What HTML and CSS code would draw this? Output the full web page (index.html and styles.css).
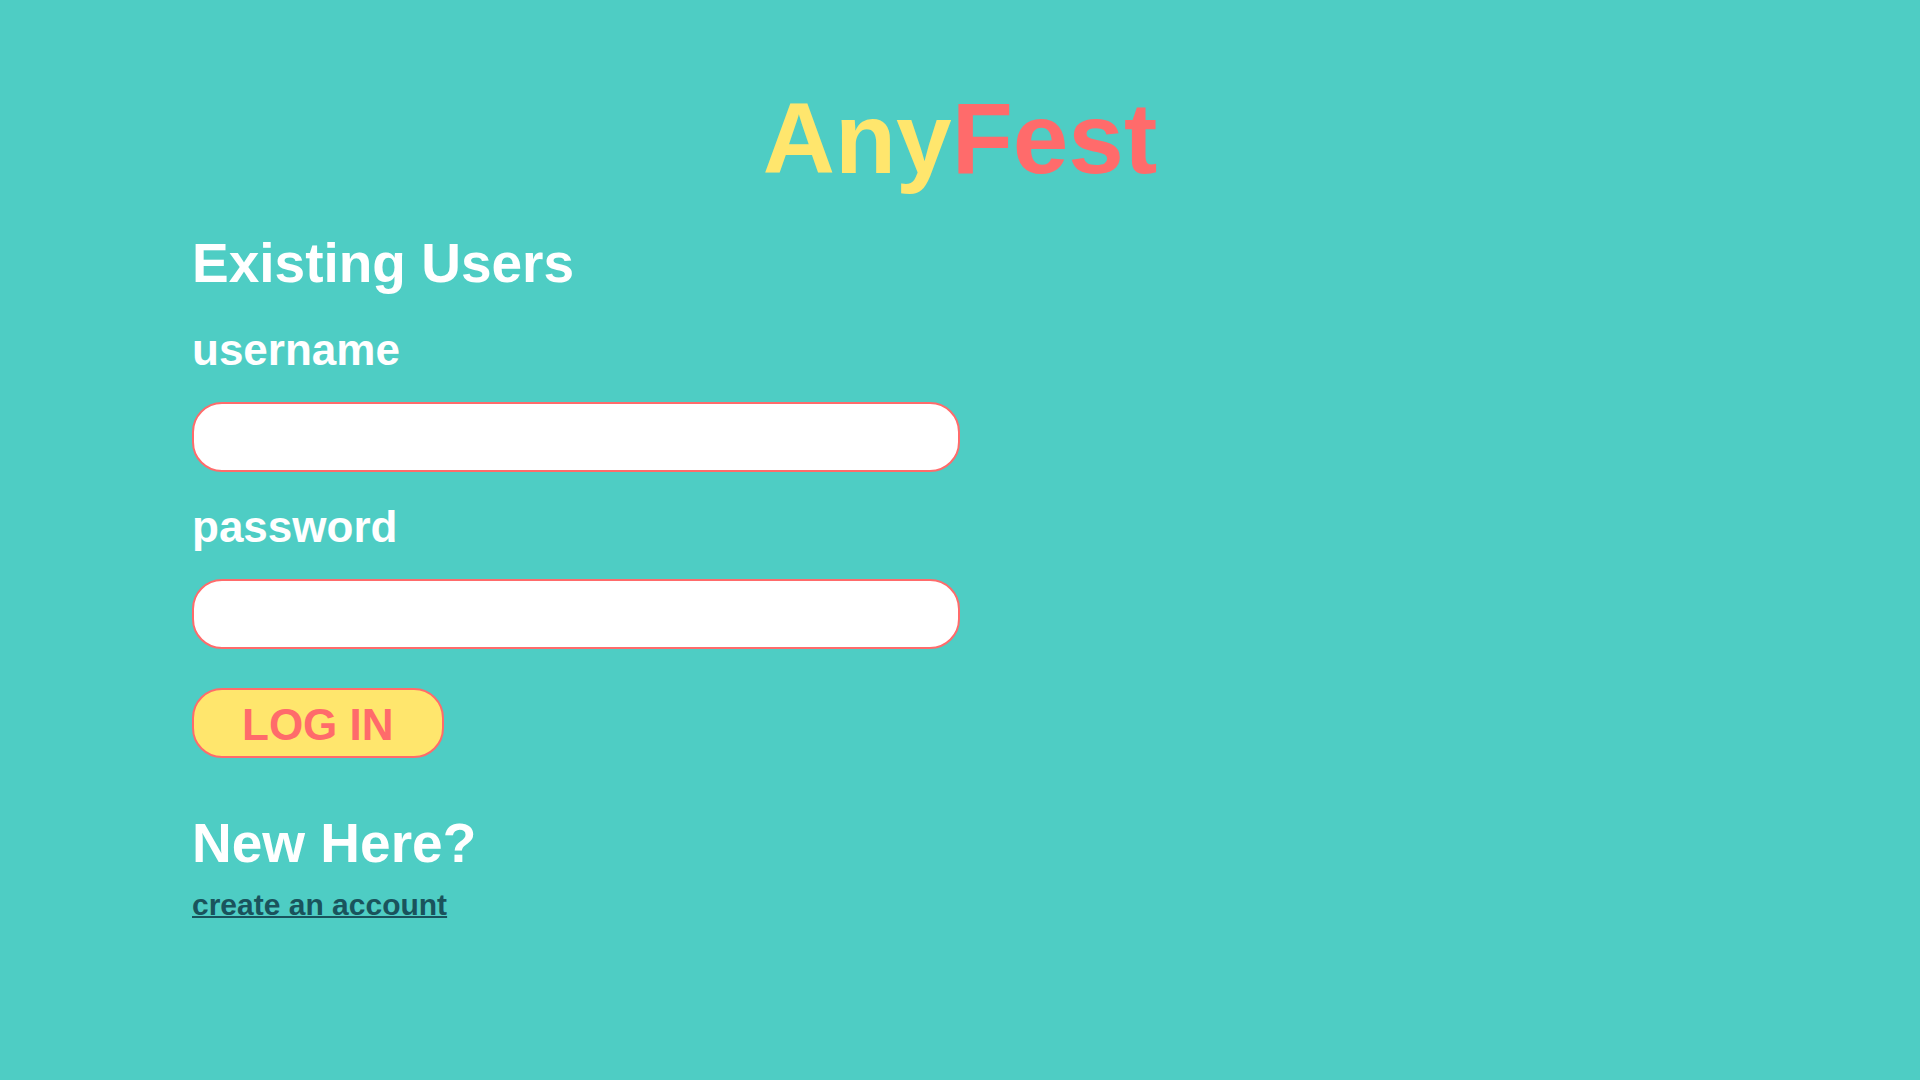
FILE: index.html
```html
<!DOCTYPE html>
<html lang="en">
<head>
<meta charset="utf-8">
<title>AnyFest</title>
<link rel="stylesheet" href="styles.css">
</head>
<body>
<header class="brand"><h1 class="logo"><span class="logo-any">Any</span><span class="logo-fest">Fest</span></h1></header>
<main class="content">
<form class="login">
<h2 class="heading">Existing Users</h2>
<label class="label" for="username">username</label>
<input class="field" id="username" name="username" type="text">
<label class="label" for="password">password</label>
<input class="field" id="password" name="password" type="password">
<button class="submit" type="submit">LOG IN</button>
</form>
<section class="signup">
<h2 class="heading">New Here?</h2>
<a class="create" href="#">create an account</a>
</section>
</main>
</body>
</html>
```
FILE: styles.css
```css
* { box-sizing: border-box; }
body {
  margin: 0;
  min-height: 100vh;
  padding: 78px 10%;
  background: #4ecdc4;
  color: #fff;
  font-family: "Liberation Sans", Arial, sans-serif;
  font-weight: 700;
}
.brand { text-align: center; }
.logo { margin: 0; font-size: 100px; line-height: 120px; }
.logo-any { color: #ffe66d; }
.logo-fest { color: #ff6b6b; }
.login { display: flex; flex-direction: column; align-items: flex-start; padding-top: 33px; }
.heading { margin: 0; font-size: 55px; line-height: 64px; }
.label { margin-top: 31px; font-size: 44px; line-height: 48px; }
.field {
  width: 50%;
  height: 70px;
  margin-top: 28px;
  padding: 0 32px;
  border: 2px solid #ff6b6b;
  border-radius: 30px;
  background: #fff;
  font: inherit;
  font-size: 32px;
}
.submit {
  margin-top: 39px;
  height: 70px;
  padding: 4px 48px 0;
  border: 2px solid #ff6b6b;
  border-radius: 30px;
  background: #ffe66d;
  color: #ff6b6b;
  font: inherit;
  font-size: 44px;
}
.signup { display: flex; flex-direction: column; align-items: flex-start; gap: 12px; padding-top: 53px; }
.create {
  color: #1a535c;
  font-size: 30px;
  line-height: 36px;
  text-decoration-thickness: 2px;
}
```
